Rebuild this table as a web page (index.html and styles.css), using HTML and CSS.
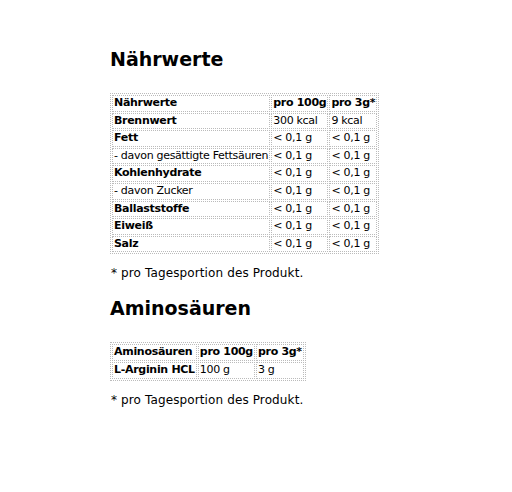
FILE: index.html
```html
<!DOCTYPE html>
<html lang="de">
<head>
<meta charset="utf-8">
<link rel="stylesheet" href="styles.css">
</head>
<body>
<div class="page">
  <h2 class="title">Nährwerte</h2>
  <table class="nt">
    <tr><th>Nährwerte</th><th>pro 100g</th><th>pro 3g*</th></tr>
    <tr><th>Brennwert</th><td>300 kcal</td><td>9 kcal</td></tr>
    <tr><th>Fett</th><td>&lt; 0,1 g</td><td>&lt; 0,1 g</td></tr>
    <tr><td>- davon gesättigte Fettsäuren</td><td>&lt; 0,1 g</td><td>&lt; 0,1 g</td></tr>
    <tr><th>Kohlenhydrate</th><td>&lt; 0,1 g</td><td>&lt; 0,1 g</td></tr>
    <tr><td>- davon Zucker</td><td>&lt; 0,1 g</td><td>&lt; 0,1 g</td></tr>
    <tr><th>Ballaststoffe</th><td>&lt; 0,1 g</td><td>&lt; 0,1 g</td></tr>
    <tr><th>Eiweiß</th><td>&lt; 0,1 g</td><td>&lt; 0,1 g</td></tr>
    <tr><th>Salz</th><td>&lt; 0,1 g</td><td>&lt; 0,1 g</td></tr>
  </table>
  <p class="note">* pro Tagesportion des Produkt.</p>
  <h2 class="title">Aminosäuren</h2>
  <table class="nt">
    <tr><th>Aminosäuren</th><th>pro 100g</th><th>pro 3g*</th></tr>
    <tr><th>L-Arginin HCL</th><td>100 g</td><td>3 g</td></tr>
  </table>
  <p class="note">* pro Tagesportion des Produkt.</p>
</div>
</body>
</html>
```

FILE: styles.css
```css
html, body {
  margin: 0;
  padding: 0;
  background: #fff;
}
.page {
  padding: 47px 0 0 110px;
  font-family: "DejaVu Sans", Verdana, sans-serif;
  color: #000;
}
.title {
  font-size: 19px;
  font-weight: bold;
  margin: 0 0 22px 0;
  line-height: 24px;
}
.nt {
  border: 1px dotted #bbb;
  border-spacing: 1px;
  font-size: 11px;
  letter-spacing: -0.3px;
}
.nt th, .nt td {
  border: 1px dotted #bbb;
  padding: 1px;
  text-align: left;
  line-height: 12.6px;
  white-space: nowrap;
}
.nt th {
  font-weight: bold;
}
.nt td {
  font-weight: normal;
}
.note {
  font-size: 12px;
  letter-spacing: 0.12px;
  margin: 11px 0 15px 1px;
  line-height: 16px;
}
```
